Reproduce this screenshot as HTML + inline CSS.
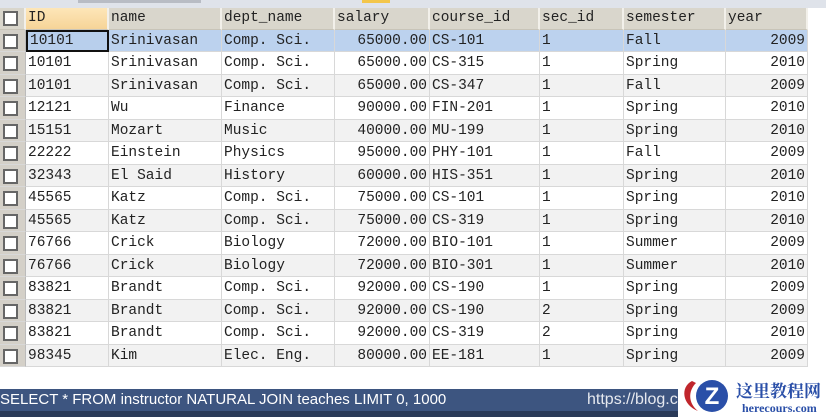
<!DOCTYPE html>
<html><head><meta charset="utf-8"><style>
*{margin:0;padding:0;box-sizing:border-box}
body{width:826px;height:417px;overflow:hidden;background:#fff;position:relative;font-family:"Liberation Mono",monospace;font-size:14.5px;color:#222}
.top{position:absolute;left:0;top:0;width:826px;height:8px;background:#dfe3ea}
.top .b{position:absolute;left:78px;top:0;width:123px;height:3px;background:#b8bcc4}
.top .y{position:absolute;left:362px;top:0;width:28px;height:3px;background:#f3c64a}
.r{position:absolute;left:0;width:808px;height:22.5px}
.c{position:absolute;top:0;height:100%;border-right:1px solid #d8d8d8;border-bottom:1px solid #d8d8d8;line-height:22px;padding-left:2px;white-space:pre;overflow:hidden}
.h .c{background:#d9d6cc;border-right:2px solid #f2f0ea;border-bottom:1px solid #c8c4b8;line-height:20px}
.n{text-align:right;padding-right:2px;padding-left:0}
.cb{background:#d4d0c8;border-right:1px solid #bbb}
.cb i{position:absolute;left:3px;top:4px;width:15px;height:15px;background:#fff;border:2.5px solid #666}
.sb{position:absolute;left:0;top:389px;width:826px;height:22px;background:#3d5580;color:#fff;font-family:"Liberation Sans",sans-serif;font-size:15px;line-height:22px;padding-left:0}
.sb2{position:absolute;left:0;top:411px;width:826px;height:6px;background:#2a3a58}
.url{position:absolute;left:587px;top:0;color:#e6e9ef;font-size:16px}
.logo{position:absolute;left:678px;top:375px;width:148px;height:42px;background:#fff}
</style></head><body>
<div class="top"><div class="b"></div><div class="y"></div></div>
<div id="t"></div>
<div class="sb">SELECT * FROM instructor NATURAL JOIN teaches LIMIT 0, 1000<span class="url">https://blog.cs</span></div>
<div class="sb2"></div>
<div class="logo">
<svg width="60" height="42" viewBox="0 0 60 42" style="position:absolute;left:0;top:0">
<path d="M14 6 C2 12 4 30 20 36 C10 28 10 16 18 8 Z" fill="#c0262c"/>
<circle cx="34" cy="21" r="16" fill="#2a4fa8"/>
<text x="34" y="29" text-anchor="middle" font-family="Liberation Sans" font-weight="bold" font-size="24" fill="#fff">Z</text>
</svg>
<div style="position:absolute;left:58px;top:2px;white-space:nowrap;font-family:'Noto Serif CJK SC','Noto Sans CJK SC',serif;font-weight:bold;font-size:17px;color:#2a4fa8">这里教程网</div>
<div style="position:absolute;left:64px;top:26px;white-space:nowrap;font-family:'Liberation Serif',serif;font-weight:bold;font-size:12px;color:#2a4fa8">herecours.com</div>
</div>
<script>
const cols=[[0,26],[26,83],[109,113],[222,113],[335,95],[430,110],[540,84],[624,102],[726,82]];
const data=[
["10101","Srinivasan","Comp. Sci.","65000.00","CS-101","1","Fall","2009"],
["10101","Srinivasan","Comp. Sci.","65000.00","CS-315","1","Spring","2010"],
["10101","Srinivasan","Comp. Sci.","65000.00","CS-347","1","Fall","2009"],
["12121","Wu","Finance","90000.00","FIN-201","1","Spring","2010"],
["15151","Mozart","Music","40000.00","MU-199","1","Spring","2010"],
["22222","Einstein","Physics","95000.00","PHY-101","1","Fall","2009"],
["32343","El Said","History","60000.00","HIS-351","1","Spring","2010"],
["45565","Katz","Comp. Sci.","75000.00","CS-101","1","Spring","2010"],
["45565","Katz","Comp. Sci.","75000.00","CS-319","1","Spring","2010"],
["76766","Crick","Biology","72000.00","BIO-101","1","Summer","2009"],
["76766","Crick","Biology","72000.00","BIO-301","1","Summer","2010"],
["83821","Brandt","Comp. Sci.","92000.00","CS-190","1","Spring","2009"],
["83821","Brandt","Comp. Sci.","92000.00","CS-190","2","Spring","2009"],
["83821","Brandt","Comp. Sci.","92000.00","CS-319","2","Spring","2010"],
["98345","Kim","Elec. Eng.","80000.00","EE-181","1","Spring","2009"]];
const hd=["ID","name","dept_name","salary","course_id","sec_id","semester","year"];
let h='<div class="r h" style="top:8px;height:21.5px"><div class="c cb" style="left:0;width:26px"><i style="top:3px"></i></div>';
hd.forEach((t,i)=>{const[x,w]=cols[i+1];h+=`<div class="c" style="left:${x}px;width:${w}px;${i==0?'background:linear-gradient(#fde6b8,#f6d498);':''}">${t}</div>`});
h+='</div>';
data.forEach((r,j)=>{const top=29.5+j*22.5;const bg=j==0?'#bcd2ee':(j%2?'#ffffff':'#f2f2f2');
h+=`<div class="r" style="top:${top}px;background:${bg}"><div class="c cb" style="left:0;width:26px"><i></i></div>`;
r.forEach((t,i)=>{const[x,w]=cols[i+1];const n=(i==3||i==7)?' n':'';
let st=`left:${x}px;width:${w}px;`;if(j==0&&i==0)st+='border:2px solid #111;line-height:19px;background:#b8cfec;';
h+=`<div class="c${n}" style="${st}">${t}</div>`});h+='</div>'});
document.getElementById('t').innerHTML=h;
</script>
</body></html>
